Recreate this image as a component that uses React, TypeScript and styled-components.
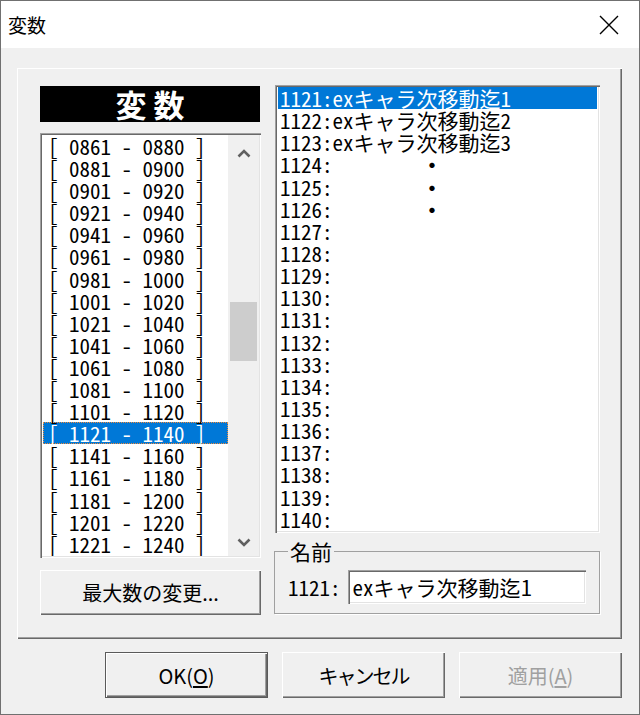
import * as React from 'react';
import styled, { createGlobalStyle } from 'styled-components';

const GlobalStyle = createGlobalStyle`
  html, body {
    margin: 0;
    padding: 0;
    background: #f0f0f0;
  }
  body {
    font-family: "Noto Sans CJK JP", "Liberation Sans", sans-serif;
    color: #000;
  }
`;

const MONO = `"Noto Sans Mono CJK JP", "Noto Sans CJK JP", "DejaVu Sans Mono", monospace`;

const Window = styled.div`
  width: 640px;
  height: 715px;
  box-sizing: border-box;
  border: 1px solid #707070;
  background: #f0f0f0;
  display: flex;
  flex-direction: column;
`;

const TitleBar = styled.div`
  height: 47px;
  background: #fff;
  display: flex;
  align-items: center;
  justify-content: space-between;
  padding: 0 20px 0 7px;
  font-size: 19px;
`;

const Body = styled.div`
  padding: 20px 17px 0 16px;
`;

const Panel = styled.div`
  height: 571px;
  box-sizing: border-box;
  padding: 17px 22px 0 23px;
  display: flex;
  gap: 14px;
  box-shadow: inset 1px 1px #fff, inset -1px -1px #696969, inset -2px -2px #a0a0a0;
`;

const LeftCol = styled.div`
  width: 221px;
  display: flex;
  flex-direction: column;
`;

const RightCol = styled.div`
  width: 325px;
  display: flex;
  flex-direction: column;
`;

const Banner = styled.div`
  margin-top: 1px;
  height: 36px;
  width: 220px;
  background: #000;
  color: #fff;
  font-size: 31px;
  font-weight: 700;
  line-height: 36px;
  text-align: center;
  letter-spacing: 7px;
  text-indent: 7px;
`;

const ListBox = styled.div<{ $height: number }>`
  height: ${p => p.$height}px;
  box-sizing: border-box;
  padding: 2px;
  background: #fff;
  display: flex;
  box-shadow: inset 1px 1px #a0a0a0, inset 2px 2px #696969, inset -1px -1px #fff, inset -2px -2px #e3e3e3;
`;

const Rows = styled.div`
  flex: 1;
  overflow: hidden;
  font-family: ${MONO};
  font-feature-settings: "hwid";
  font-size: 21px;
`;

const RangeRow = styled.div<{ $selected?: boolean }>`
  height: 22.1px;
  line-height: 22px;
  padding-left: 5px;
  margin-left: 1px;
  white-space: pre;
  box-sizing: border-box;
  background: ${p => (p.$selected ? '#0078d7' : 'transparent')};
  color: ${p => (p.$selected ? '#fff' : '#000')};
  outline: ${p => (p.$selected ? '1px dotted #f08c3c' : 'none')};
  outline-offset: -1px;
`;

const VarRow = styled.div<{ $selected?: boolean }>`
  height: 22.15px;
  line-height: 22px;
  padding-left: 2px;
  margin: 0 1px;
  white-space: pre;
  background: ${p => (p.$selected ? '#0078d7' : 'transparent')};
  color: ${p => (p.$selected ? '#fff' : '#000')};
`;

const Dot = styled.span`
  margin-left: 89px;
  font-weight: 700;
`;

const ScrollBar = styled.div`
  width: 31px;
  background: #f0f0f0;
  display: flex;
  flex-direction: column;
`;

const ArrowButton = styled.div<{ $h: number }>`
  height: ${p => p.$h}px;
  display: flex;
  align-items: center;
  justify-content: center;
`;

const Track = styled.div`
  flex: 1;
`;

const Thumb = styled.div<{ $top: number; $size: number }>`
  margin: ${p => p.$top}px 2px 0 2px;
  height: ${p => p.$size}px;
  background: #cdcdcd;
`;

const Button = styled.button<{ $default?: boolean }>`
  font-family: "Noto Sans CJK JP", "Liberation Sans", sans-serif;
  font-size: 20px;
  color: #000;
  background: #f0f0f0;
  border: ${p => (p.$default ? '1px solid #5a5a5a' : 'none')};
  box-sizing: border-box;
  padding: 0;
  box-shadow: inset 1px 1px #fff, inset -1px -1px #696969, inset -2px -2px #a0a0a0;
  &:disabled {
    color: #a0a0a0;
  }
  u {
    text-underline-offset: 2px;
  }
`;

const WideButton = styled(Button)`
  margin-top: 12px;
  width: 221px;
  height: 45px;
`;

const Kana = styled.span`
  letter-spacing: -2px;
`;

const GroupBox = styled.fieldset`
  margin: 7px 0 0 -1px;
  padding: 0 13px 9px 13px;
  border: 1px solid #a0a0a0;
  box-shadow: 1px 1px #fff;
`;

const Legend = styled.legend`
  padding: 0 2px;
  font-size: 21px;
  line-height: 22px;
`;

const NameRow = styled.div`
  margin-top: 8px;
  display: flex;
  align-items: center;
  gap: 7px;
`;

const NameLabel = styled.span`
  font-family: ${MONO};
  font-feature-settings: "hwid";
  font-size: 21px;
  white-space: pre;
`;

const NameInput = styled.div`
  flex: 1;
  height: 34px;
  box-sizing: border-box;
  padding: 2px 5px;
  background: #fff;
  font-size: 21px;
  line-height: 30px;
  white-space: pre;
  box-shadow: inset 1px 1px #a0a0a0, inset 2px 2px #696969, inset -1px -1px #fff, inset -2px -2px #e3e3e3;
  span {
    font-feature-settings: "hwid";
  }
`;

const Footer = styled.div`
  margin-top: 13px;
  padding-right: 17px;
  display: flex;
  justify-content: flex-end;
  gap: 14px;
`;

const DialogButton = styled(Button)`
  width: 163px;
  height: 46px;
`;

const pad = (n: number) => String(n).padStart(4, '0');

const ranges = Array.from({ length: 19 }, (_, i) => {
  const start = 861 + i * 20;
  return { start, label: `[ ${pad(start)} - ${pad(start + 19)} ]` };
});

const names: Record<number, string> = {
  1121: 'exキャラ次移動迄1',
  1122: 'exキャラ次移動迄2',
  1123: 'exキャラ次移動迄3',
};

const dotted = [1124, 1125, 1126];
const vars = Array.from({ length: 20 }, (_, i) => 1121 + i);

const CloseIcon = () => (
  <svg width="20" height="20" viewBox="0 0 20 20">
    <path d="M1 1 L19 19 M19 1 L1 19" stroke="#000" strokeWidth="1.4" fill="none" />
  </svg>
);

const Chevron = ({ up }: { up?: boolean }) => (
  <svg width="14" height="9" viewBox="0 0 14 9">
    <path
      d={up ? 'M1.5 7.5 L7 2 L12.5 7.5' : 'M1.5 1.5 L7 7 L12.5 1.5'}
      stroke="#606060"
      strokeWidth="2.6"
      fill="none"
    />
  </svg>
);

const App = () => {
  const selectedRange = 1121;
  const selectedVar = 1121;

  return (
    <>
      <GlobalStyle />
      <Window>
        <TitleBar>
          <span>変数</span>
          <CloseIcon />
        </TitleBar>
        <Body>
          <Panel>
            <LeftCol>
              <Banner>変数</Banner>
              <ListBox $height={425} style={{ marginTop: 11 }}>
                <Rows>
                  {ranges.map(r => (
                    <RangeRow key={r.start} $selected={r.start === selectedRange}>
                      {r.label}
                    </RangeRow>
                  ))}
                </Rows>
                <ScrollBar>
                  <ArrowButton $h={36}>
                    <Chevron up />
                  </ArrowButton>
                  <Track>
                    <Thumb $top={131} $size={59} />
                  </Track>
                  <ArrowButton $h={28}>
                    <Chevron />
                  </ArrowButton>
                </ScrollBar>
              </ListBox>
              <WideButton>最大数の変更...</WideButton>
            </LeftCol>
            <RightCol>
              <ListBox $height={448}>
                <Rows>
                  {vars.map(v => (
                    <VarRow key={v} $selected={v === selectedVar}>
                      {v}:{names[v] || ''}
                      {dotted.includes(v) && <Dot>・</Dot>}
                    </VarRow>
                  ))}
                </Rows>
              </ListBox>
              <GroupBox>
                <Legend>名前</Legend>
                <NameRow>
                  <NameLabel>1121:</NameLabel>
                  <NameInput>
                    <span>ex</span>キャラ次移動迄1
                  </NameInput>
                </NameRow>
              </GroupBox>
            </RightCol>
          </Panel>
        </Body>
        <Footer>
          <DialogButton $default>
            OK(<u>O</u>)
          </DialogButton>
          <DialogButton>
            <Kana>キャンセル</Kana>
          </DialogButton>
          <DialogButton disabled>
            適用(<u>A</u>)
          </DialogButton>
        </Footer>
      </Window>
    </>
  );
};

export default App;
